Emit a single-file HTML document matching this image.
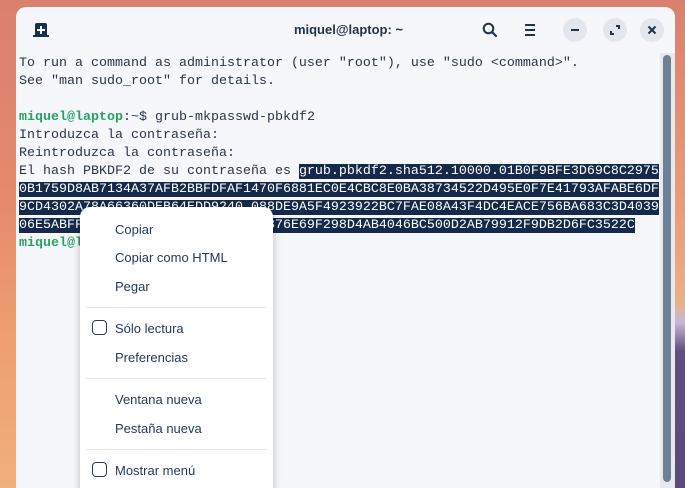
<!DOCTYPE html>
<html style="width:685px;height:488px;overflow:hidden"><head><meta charset="utf-8"><style>
*{margin:0;padding:0;box-sizing:border-box}
body{width:685px;height:488px;overflow:hidden;position:relative;font-family:"Liberation Sans",sans-serif;
background:linear-gradient(180deg,#d9806f 0%,#e58a6c 40%,#eea070 70%,#f0b07a 100%);}
.rbg{position:absolute;right:0;top:0;width:12px;height:488px;background:linear-gradient(180deg,#d9806f 0%,#eba27a 50%,#e9b088 62%,#c8b8d8 66%,#5e4f7c 72%,#5a4b78 100%)}
.win{position:absolute;left:16px;top:7px;width:659px;height:481px;background:#f6f7fb;border-radius:10px 10px 0 0;overflow:hidden}
.title{position:absolute;left:0;right:0;top:15px;text-align:center;font-weight:bold;font-size:13px;color:#243447;padding-left:6px}
.btn{position:absolute;top:11px;width:24px;height:24px;border-radius:50%;background:#e3e6ec}
.term{position:absolute;left:3px;top:48px;font-family:"Liberation Mono",monospace;font-size:13.33px;line-height:18px;color:#283547;white-space:pre}
.g{color:#26a35f;font-weight:bold}
.s{background:#15294a;color:#fff}
.sb{position:absolute;left:644px;top:46px;width:15px;height:435px;background:#e6e9ee}
.sb i{position:absolute;left:3px;top:2px;width:8px;height:427px;border-radius:4px;background:#6c8196}
.menu{position:absolute;left:80px;top:207px;width:193px;height:290px;background:#fff;border-radius:10px;box-shadow:0 2px 8px rgba(0,0,0,.25);font-size:13px;color:#243a5a}
.it{position:absolute;left:35px}
.sep{position:absolute;left:6px;right:6px;height:1px;background:#e2e4ea}
.cb{position:absolute;left:12px;width:15px;height:15px;border:1.5px solid #243a5a;border-radius:4px}
</style></head><body>
<div class="rbg"></div>
<div class="win">
 <svg style="position:absolute;left:17px;top:16px" width="16" height="14" viewBox="0 0 16 14"><path d="M2 2a2 2 0 0 1 2-2h8a2 2 0 0 1 2 2v10h2v2H0v-2h2z" fill="#16314f"/><path d="M7 3h2v3h3v2H9v3H7V8H4V6h3z" fill="#fff"/></svg>
 <div class="title">miquel@laptop: ~</div>
 <svg style="position:absolute;left:466px;top:15px" width="16" height="16" viewBox="0 0 16 16"><circle cx="6.5" cy="6.5" r="4.8" fill="none" stroke="#243447" stroke-width="2"/><path d="M10 10l4 4" stroke="#243447" stroke-width="2.2" stroke-linecap="round"/></svg>
 <svg style="position:absolute;left:508px;top:16px" width="12" height="14" viewBox="0 0 12 14"><path d="M1 2h10M1 7h10M1 12h10" stroke="#243447" stroke-width="2"/></svg>
 <div class="btn" style="left:547px"><div style="position:absolute;left:8px;top:11px;width:8px;height:2px;background:#243447"></div></div>
 <div class="btn" style="left:587px"><svg width="24" height="24" viewBox="0 0 24 24"><path d="M13 8h3v3M11 16H8v-3" fill="none" stroke="#243447" stroke-width="2"/></svg></div>
 <div class="btn" style="left:624px"><svg width="24" height="24" viewBox="0 0 24 24"><path d="M8.5 8.5l7 7M15.5 8.5l-7 7" stroke="#243447" stroke-width="2"/></svg></div>
 <div class="term">To run a command as administrator (user "root"), use "sudo &lt;command&gt;".
See "man sudo_root" for details.

<span class="g">miquel@laptop</span>:~$ grub-mkpasswd-pbkdf2
Introduzca la contraseña:
Reintroduzca la contraseña:
El hash PBKDF2 de su contraseña es <span class="s">grub.pbkdf2.sha512.10000.01B0F9BFE3D69C8C2975</span>
<span class="s">0B1759D8AB7134A37AFB2BBFDFAF1470F6881EC0E4CBC8E0BA38734522D495E0F7E41793AFABE6DF</span>
<span class="s">9CD4302A78A66360DEB64EDD9240 088DE9A5F4923922BC7FAE08A43F4DC4EACE756BA683C3D4039</span>
<span class="s">06E5ABFF3A91C7D02E4B58F6A1D0C2B376E69F298D4AB4046BC500D2AB79912F9DB2D6FC3522C</span>
<span class="g">miquel@laptop</span>:~$ </div>
 <div class="sb"><i></i></div>
</div>
<div class="menu">
 <div class="it" style="top:15px">Copiar</div>
 <div class="it" style="top:43px">Copiar como HTML</div>
 <div class="it" style="top:72px">Pegar</div>
 <div class="sep" style="top:100px"></div>
 <div class="cb" style="top:113px"></div><div class="it" style="top:114px">Sólo lectura</div>
 <div class="it" style="top:143px">Preferencias</div>
 <div class="sep" style="top:171px"></div>
 <div class="it" style="top:185px">Ventana nueva</div>
 <div class="it" style="top:214px">Pestaña nueva</div>
 <div class="sep" style="top:242px"></div>
 <div class="cb" style="top:255px"></div><div class="it" style="top:256px">Mostrar menú</div>
</div>
</body></html>
